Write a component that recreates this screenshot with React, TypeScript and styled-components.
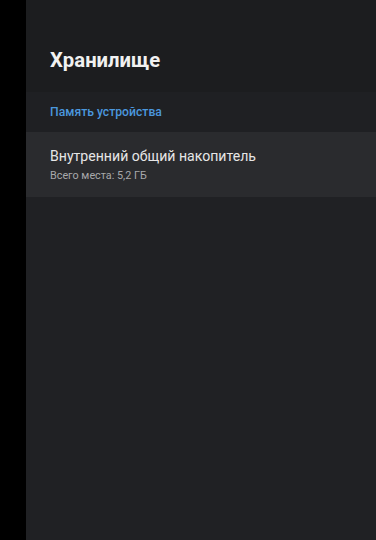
import React from "react";
import styled, { createGlobalStyle } from "styled-components";

const GlobalStyle = createGlobalStyle`
  html, body {
    margin: 0;
    padding: 0;
    height: 100%;
    background: #000;
  }
  #root {
    height: 100%;
  }
  * {
    box-sizing: border-box;
  }
`;

const Screen = styled.div`
  display: flex;
  width: 376px;
  height: 540px;
  font-family: Roboto, "Noto Sans", sans-serif;
`;

const Edge = styled.div`
  width: 26px;
  flex-shrink: 0;
  background: #000;
`;

const Panel = styled.div`
  flex: 1;
  display: flex;
  flex-direction: column;
  background: #202124;
`;

const Header = styled.div`
  height: 92px;
  display: flex;
  align-items: center;
  padding: 28px 24px 0;
  background: #1c1d1f;
`;

const Title = styled.h1`
  margin: 0;
  font-size: 20.3px;
  font-weight: 700;
  color: #f1f1f1;
`;

const SectionLabel = styled.div`
  height: 40px;
  display: flex;
  align-items: center;
  padding: 0 24px;
  background: #1f2023;
  font-size: 12.2px;
  font-weight: 500;
  color: #4b97de;
`;

const Item = styled.div`
  height: 65px;
  display: flex;
  flex-direction: column;
  justify-content: center;
  gap: 5px;
  padding: 0 24px 0;
  background: #2a2b2e;
`;

const ItemTitle = styled.div`
  font-size: 14.1px;
  color: #e6e6e6;
`;

const ItemSub = styled.div`
  font-size: 10.8px;
  color: #a8a9ab;
`;

export default function App() {
  return (
    <>
      <GlobalStyle />
      <Screen>
        <Edge />
        <Panel>
          <Header>
            <Title>Хранилище</Title>
          </Header>
          <SectionLabel>Память устройства</SectionLabel>
          <Item>
            <ItemTitle>Внутренний общий накопитель</ItemTitle>
            <ItemSub>Всего места: 5,2 ГБ</ItemSub>
          </Item>
        </Panel>
      </Screen>
    </>
  );
}
